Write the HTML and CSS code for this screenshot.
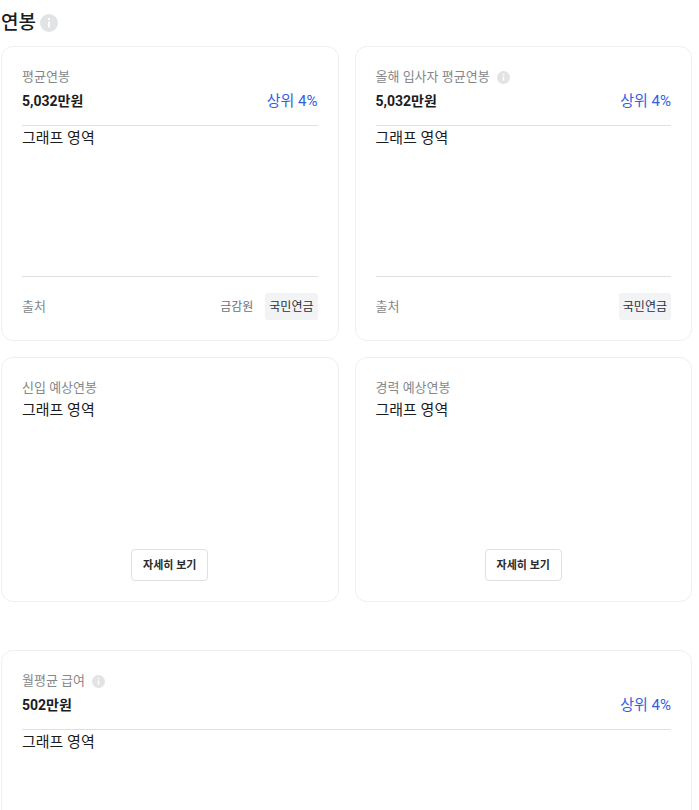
FILE: index.html
```html
<!DOCTYPE html>
<html lang="ko">
<head>
    <meta charset="UTF-8">
    <meta name="viewport" content="width=device-width, initial-scale=1.0">
    <title>연봉</title>
    <link rel="stylesheet" href="styles.css">
</head>
<body>
    <svg class="icon-defs" aria-hidden="true">
        <symbol id="icon-info" viewBox="0 0 18 18">
            <circle cx="9" cy="9" r="9" fill="#e2e3e5"/>
            <rect x="8" y="4" width="2" height="2" fill="#fff"/>
            <rect x="8" y="7.5" width="2" height="6" fill="#fff"/>
        </symbol>
    </svg>

    <main class="salary">
        <header class="section-header">
            <h2>연봉</h2>
            <button type="button" class="info-button" aria-label="연봉 안내">
                <svg class="icon icon-large"><use href="#icon-info"/></svg>
            </button>
        </header>

        <div class="card-grid">
            <section class="card">
                <h3 class="card-title">평균연봉</h3>
                <div class="card-summary">
                    <strong>5,032만원</strong>
                    <span class="rank">상위 4%</span>
                </div>
                <div class="graph">그래프 영역</div>
                <div class="card-source">
                    <span>출처</span>
                    <div class="source-tabs">
                        <button type="button" class="source-tab">금감원</button>
                        <button type="button" class="source-tab active">국민연금</button>
                    </div>
                </div>
            </section>

            <section class="card">
                <h3 class="card-title">
                    올해 입사자 평균연봉
                    <button type="button" class="info-button" aria-label="올해 입사자 평균연봉 안내">
                        <svg class="icon"><use href="#icon-info"/></svg>
                    </button>
                </h3>
                <div class="card-summary">
                    <strong>5,032만원</strong>
                    <span class="rank">상위 4%</span>
                </div>
                <div class="graph">그래프 영역</div>
                <div class="card-source">
                    <span>출처</span>
                    <div class="source-tabs">
                        <button type="button" class="source-tab active">국민연금</button>
                    </div>
                </div>
            </section>

            <section class="card">
                <h3 class="card-title">신입 예상연봉</h3>
                <div class="graph graph-small">그래프 영역</div>
                <button type="button" class="detail-button">자세히 보기</button>
            </section>

            <section class="card">
                <h3 class="card-title">경력 예상연봉</h3>
                <div class="graph graph-small">그래프 영역</div>
                <button type="button" class="detail-button">자세히 보기</button>
            </section>
        </div>

        <section class="card card-wide">
            <h3 class="card-title">
                월평균 급여
                <button type="button" class="info-button" aria-label="월평균 급여 안내">
                    <svg class="icon"><use href="#icon-info"/></svg>
                </button>
            </h3>
            <div class="card-summary">
                <strong>502만원</strong>
                <span class="rank">상위 4%</span>
            </div>
            <div class="graph">그래프 영역</div>
        </section>
    </main>
</body>
</html>
```

FILE: styles.css
```css
* {
    box-sizing: border-box;
}

body {
    margin: 0;
    font-family: Roboto, "Noto Sans CJK KR", sans-serif;
    font-size: 15px;
    line-height: 24px;
    color: #1b1c1e;
    background: #fff;
}

h2, h3 {
    margin: 0;
}

button {
    font-family: inherit;
    cursor: pointer;
}

.icon-defs {
    position: absolute;
    width: 0;
    height: 0;
}

.icon {
    display: block;
    width: 13px;
    height: 13px;
}

.icon-large {
    width: 18px;
    height: 18px;
}

.info-button {
    padding: 0;
    border: none;
    background: none;
}

.salary {
    padding: 8px 7px 0 1px;
}

.section-header {
    display: flex;
    align-items: center;
    gap: 4px;
    height: 30px;
    margin-bottom: 8px;
}

.section-header h2 {
    font-size: 19px;
    font-weight: 500;
    line-height: 30px;
}

/* Cards */
.card-grid {
    display: grid;
    grid-template-columns: 1fr 1fr;
    gap: 16px;
}

.card {
    display: flex;
    flex-direction: column;
    padding: 20px;
    border: 1px solid #efeff0;
    border-radius: 12px;
}

.card-wide {
    margin-top: 48px;
}

.card-title {
    display: flex;
    align-items: center;
    gap: 7px;
    font-size: 13px;
    font-weight: 400;
    line-height: 20px;
    color: #85878a;
}

.card-summary {
    display: flex;
    align-items: center;
    justify-content: space-between;
    padding: 2px 0 12px;
    border-bottom: 1px solid #dfe0e2;
}

.card-summary strong {
    font-size: 14px;
    font-weight: 700;
}

.rank {
    color: #3360e0;
}

.graph {
    height: 150px;
}

.graph-small {
    height: 141px;
}

/* Source */
.card-source {
    display: flex;
    align-items: center;
    justify-content: space-between;
    padding-top: 16px;
    border-top: 1px solid #dfe0e2;
    font-size: 13px;
    color: #85878a;
}

.source-tabs {
    display: flex;
    gap: 8px;
}

.source-tab {
    height: 27px;
    padding: 0 4px 2px;
    border: none;
    border-radius: 3px;
    background: none;
    font-size: 12px;
    color: #6b7180;
}

.source-tab.active {
    background: #f2f3f5;
    color: #283040;
}

.detail-button {
    align-self: center;
    height: 32px;
    margin-top: 10px;
    padding: 0 11px 2px;
    border: 1px solid #dfe0e2;
    border-radius: 4px;
    background: #fff;
    font-size: 11px;
    font-weight: 700;
    color: #2a2b2d;
}
```
